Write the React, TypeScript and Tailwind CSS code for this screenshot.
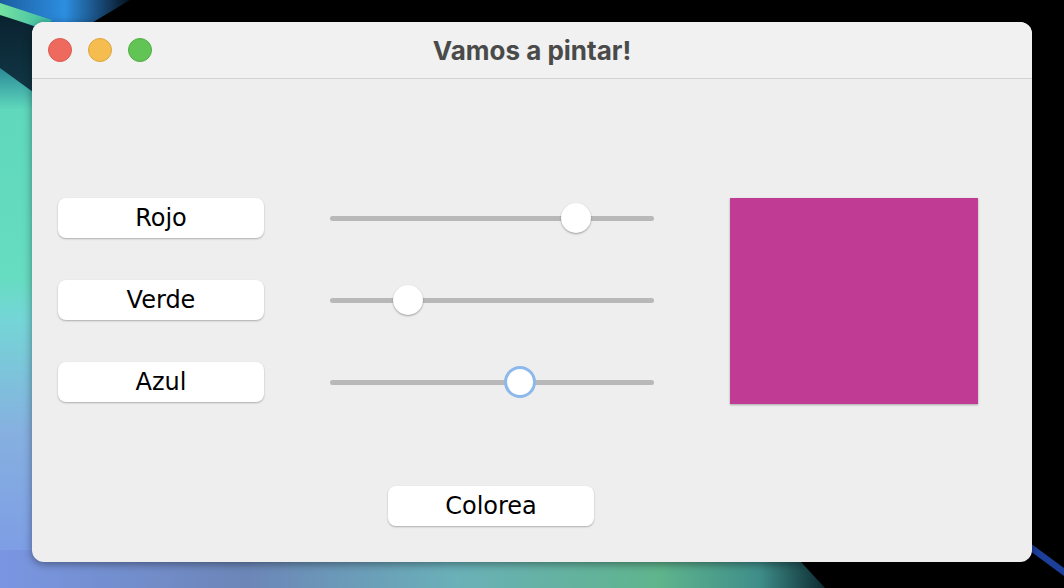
import { useState } from "react";

const labelFont = { fontFamily: '"DejaVu Sans", "Liberation Sans", sans-serif' };

function Wallpaper() {
  return (
    <svg className="absolute inset-0" width="1064" height="588" viewBox="0 0 1064 588">
      <defs>
        <linearGradient id="left" x1="0" y1="0" x2="0" y2="1">
          <stop offset="0" stopColor="#2a8a98" />
          <stop offset="0.08" stopColor="#5fd8bc" />
          <stop offset="0.4" stopColor="#66dcc0" />
          <stop offset="0.48" stopColor="#74d6d6" />
          <stop offset="0.7" stopColor="#86b0e0" />
          <stop offset="1" stopColor="#7b98e6" />
        </linearGradient>
        <linearGradient id="bottom" x1="0" y1="0" x2="1" y2="0">
          <stop offset="0" stopColor="#7a96e2" />
          <stop offset="0.3" stopColor="#6c86b8" />
          <stop offset="0.55" stopColor="#6ab0b8" />
          <stop offset="0.8" stopColor="#5fb48c" />
          <stop offset="0.92" stopColor="#3f8e8a" />
          <stop offset="1" stopColor="#0c2a30" />
        </linearGradient>
        <linearGradient id="sky" x1="0" y1="0" x2="1" y2="0">
          <stop offset="0" stopColor="#1c5ea0" />
          <stop offset="0.5" stopColor="#2d8ee0" />
          <stop offset="1" stopColor="#05101c" />
        </linearGradient>
        <linearGradient id="dark" x1="0" y1="0" x2="0" y2="1">
          <stop offset="0" stopColor="#0a2230" />
          <stop offset="1" stopColor="#133c4a" />
        </linearGradient>
        <linearGradient id="glow" x1="0" y1="0" x2="1" y2="0">
          <stop offset="0" stopColor="#7ef0a0" />
          <stop offset="1" stopColor="#3fc0a0" />
        </linearGradient>
      </defs>
      <rect width="1064" height="588" fill="#000" />
      <polygon points="0,0 130,0 80,30 0,30" fill="url(#sky)" />
      <polygon points="0,14 44,30 44,110 0,68" fill="url(#dark)" />
      <polygon points="0,3 0,15 44,29 52,20" fill="url(#glow)" opacity="0.9" />
      <polygon points="0,68 44,100 44,588 0,588" fill="url(#left)" />
      <polygon points="0,550 790,550 825,588 0,588" fill="url(#bottom)" />
      <polygon points="1026,540 1064,568 1064,576 1026,548" fill="#1c3f9a" />
    </svg>
  );
}

function Slider({ value, focused }: { value: number; focused?: boolean }) {
  const pct = (value / 255) * 100;
  return (
    <div className="relative h-[40px] w-[324px]">
      <div className="absolute left-0 right-0 top-[17.5px] h-[5px] rounded-full bg-[#b8b8b8]" />
      {focused ? (
        <div
          className="absolute top-[4px] h-[32px] w-[32px] -translate-x-1/2 rounded-full border-[3px] border-[#8cb8ec] bg-white"
          style={{ left: `calc(${pct}% + 2px)` }}
        />
      ) : (
        <div
          className="absolute top-[5px] h-[30px] w-[30px] -translate-x-1/2 rounded-full bg-white shadow-[0_1px_2px_rgba(0,0,0,0.35)]"
          style={{ left: `calc(${pct}% + 2px)` }}
        />
      )}
    </div>
  );
}

function Label({ text }: { text: string }) {
  return (
    <button
      className="flex h-[40px] w-[206px] items-center justify-center rounded-[8px] bg-white text-[24px] text-black shadow-[0_1px_2px_rgba(0,0,0,0.28)]"
      style={labelFont}
    >
      {text}
    </button>
  );
}

export default function App() {
  const [rgb] = useState({ r: 192, g: 60, b: 148 });

  return (
    <div className="relative h-[588px] w-[1064px] overflow-hidden pl-[32px] pt-[22px]">
      <Wallpaper />
      <div className="relative flex h-[540px] w-[1000px] flex-col overflow-hidden rounded-[12px] bg-[#eeeeee] shadow-[0_2px_8px_rgba(0,0,0,0.4)]">
        <div className="relative flex h-[57px] items-center border-b border-[#d2d2d2] bg-[#f0f1f0] pl-[16px]">
          <div className="flex gap-[16px]">
            <span className="h-[24px] w-[24px] rounded-full border border-[#dc5a50] bg-[#ee6a5f]" />
            <span className="h-[24px] w-[24px] rounded-full border border-[#dea43c] bg-[#f5bd4f]" />
            <span className="h-[24px] w-[24px] rounded-full border border-[#52ad45] bg-[#61c454]" />
          </div>
          <div
            className="absolute inset-0 flex items-center justify-center text-[26px] font-bold text-[#4a4a4a]"
            style={{ fontFamily: 'Inter, "Noto Sans", sans-serif' }}
          >
            Vamos a pintar!
          </div>
        </div>

        <div className="flex flex-col pl-[26px] pt-[119px]">
          <div className="flex items-start">
            <div className="flex flex-col gap-[42px]">
              <div className="flex items-center gap-[66px]">
                <Label text="Rojo" />
                <Slider value={rgb.r} />
              </div>
              <div className="flex items-center gap-[66px]">
                <Label text="Verde" />
                <Slider value={rgb.g} />
              </div>
              <div className="flex items-center gap-[66px]">
                <Label text="Azul" />
                <Slider value={rgb.b} focused />
              </div>
            </div>
            <div
              className="ml-[76px] h-[206px] w-[248px] shadow-[0_1px_2px_rgba(0,0,0,0.3)]"
              style={{ backgroundColor: `rgb(${rgb.r}, ${rgb.g}, ${rgb.b})` }}
            />
          </div>

          <div className="ml-[330px] mt-[82px]">
            <Label text="Colorea" />
          </div>
        </div>
      </div>
    </div>
  );
}
